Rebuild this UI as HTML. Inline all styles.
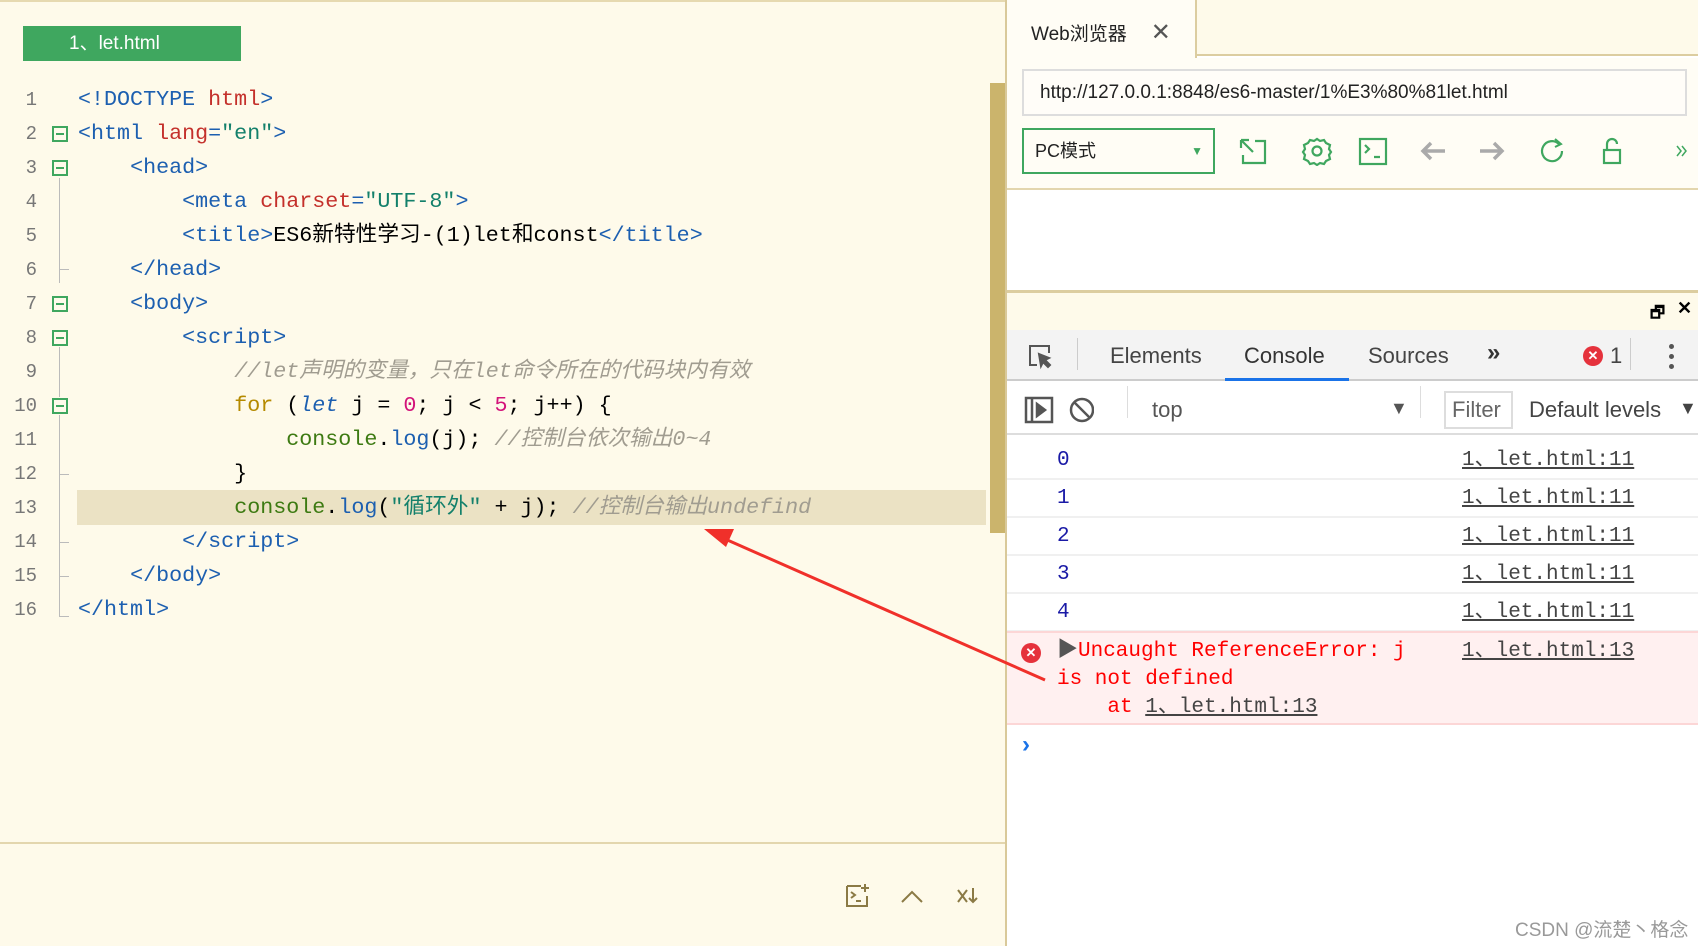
<!DOCTYPE html>
<html><head><meta charset="utf-8"><style>
*{margin:0;padding:0;box-sizing:border-box}
body{width:1698px;height:946px;position:relative;overflow:hidden;background:#fefaea;font-family:"Liberation Sans","Noto Sans CJK SC",sans-serif}
.abs{position:absolute}
#left{left:0;top:0;width:1005px;height:946px;background:#fefaea;border-top:2px solid #e6d9b0}
.tab{left:23px;top:24px;width:218px;height:35px;background:#3fa75f;color:#fff;font-size:19px;line-height:35px;padding-left:46px}
.code{font-family:"Liberation Mono","Noto Sans CJK SC",monospace;font-size:21.7px;white-space:pre;line-height:34px}
.ln{left:0;width:37px;text-align:right;color:#777;font-family:"Liberation Mono",monospace;font-size:19px}
.ln div{height:34px;line-height:34px}
.fold{width:16px;height:16px;border:2px solid #3fa75f;left:52px}
.fold:after{content:"";position:absolute;left:2px;top:5px;width:8px;height:2px;background:#3fa75f}
.t{color:#1c5fb0}.a{color:#c4302b}.v{color:#13806b}.c{color:#a09c90;font-style:italic}.k{color:#b58a00}.n{color:#d3127a}.g{color:#3d7a12}
#right{left:1005px;top:0;width:693px;height:946px;border-left:2px solid #d9c99a;background:#fff}
.mono{font-family:"Liberation Mono","Noto Sans CJK SC",monospace}
.row{position:absolute;left:0;width:693px;height:38px;border-bottom:2px solid #f0f0f0;font-size:21px;line-height:38px}
.lnk{position:absolute;left:455px;color:#444;text-decoration:underline}
</style></head><body>
<div id="left" class="abs">
 <div class="abs tab">1、let.html</div>
 <div class="abs" style="left:77px;top:488px;width:909px;height:35px;background:#ebe2c4"></div>
 <div class="abs" style="left:990px;top:81px;width:15px;height:450px;background:#cbb46c"></div>
 <div class="abs ln" style="top:81px">
  <div>1</div><div>2</div><div>3</div><div>4</div><div>5</div><div>6</div><div>7</div><div>8</div><div>9</div><div>10</div><div>11</div><div>12</div><div>13</div><div>14</div><div>15</div><div>16</div></div>
 <div class="abs fold" style="top:124px"></div>
 <div class="abs fold" style="top:158px"></div>
 <div class="abs fold" style="top:294px"></div>
 <div class="abs fold" style="top:328px"></div>
 <div class="abs fold" style="top:396px"></div>
 <div class="abs" style="left:59px;top:176px;width:1px;height:105px;background:#bbb"></div>
 <div class="abs" style="left:59px;top:345px;width:1px;height:50px;background:#bbb"></div>
 <div class="abs" style="left:59px;top:413px;width:1px;height:202px;background:#bbb"></div>
 <div class="abs" style="left:59px;top:267px;width:10px;height:1px;background:#bbb"></div>
 <div class="abs" style="left:59px;top:472px;width:10px;height:1px;background:#bbb"></div>
 <div class="abs" style="left:59px;top:540px;width:10px;height:1px;background:#bbb"></div>
 <div class="abs" style="left:59px;top:574px;width:10px;height:1px;background:#bbb"></div>
 <div class="abs" style="left:59px;top:614px;width:10px;height:1px;background:#bbb"></div>
 <div class="abs code" style="left:78px;top:81px"><span class="t">&lt;!DOCTYPE <span class="a">html</span>&gt;</span>
<span class="t">&lt;html <span class="a">lang</span>=<span class="v">"en"</span>&gt;</span>
    <span class="t">&lt;head&gt;</span>
        <span class="t">&lt;meta <span class="a">charset</span>=<span class="v">"UTF-8"</span>&gt;</span>
        <span class="t">&lt;title&gt;</span>ES6新特性学习-(1)let和const<span class="t">&lt;/title&gt;</span>
    <span class="t">&lt;/head&gt;</span>
    <span class="t">&lt;body&gt;</span>
        <span class="t">&lt;script&gt;</span>
            <span class="c">//let声明的变量，只在let命令所在的代码块内有效</span>
            <span class="k">for</span> (<span class="t" style="font-style:italic">let</span> j = <span class="n">0</span>; j &lt; <span class="n">5</span>; j++) {
                <span class="g">console</span>.<span class="t">log</span>(j); <span class="c">//控制台依次输出0~4</span>
            }
            <span class="g">console</span>.<span class="t">log</span>(<span class="v">"循环外"</span> + j); <span class="c">//控制台输出undefind</span>
        <span class="t">&lt;/script&gt;</span>
    <span class="t">&lt;/body&gt;</span>
<span class="t">&lt;/html&gt;</span></div>
 <div class="abs" style="left:0;top:840px;width:1005px;height:2px;background:#e3d6ae"></div>
 <svg class="abs" style="left:845px;top:880px" width="140" height="30" fill="none" stroke="#8b7a45" stroke-width="2">
  <path d="M2 4h14M2 4v20h20v-10M6 10l4 3-4 3M11 19h5M20 2v8M16 6h8"/>
  <path d="M57 20l10-10 10 10"/>
  <path d="M113 8l9 12M122 8l-9 12M128 6v14M124 16l4 4 4-4"/>
 </svg>
</div>
<div id="right" class="abs">
 <div class="abs" style="left:0;top:0;width:693px;height:56px;background:#fefaea;border-bottom:2px solid #dccda0"></div>
 <div class="abs" style="left:0;top:0;width:190px;height:58px;background:#fffdf5;border-right:2px solid #dccda0;font-size:19px;padding:18px 0 0 24px;color:#222">Web浏览器<span style="margin-left:24px;font-size:24px;color:#555;font-weight:300">✕</span></div>
 <div class="abs" style="left:0;top:58px;width:693px;height:130px;background:#fffdf5"></div>
 <div class="abs" style="left:0;top:188px;width:693px;height:102px;background:#fff;border-top:2px solid #e3d6ae"></div>
 <div class="abs" style="left:15px;top:69px;width:665px;height:47px;border:2px solid #ddd;background:#fffdf8;font-size:19px;line-height:43px;padding-left:16px;color:#222">http://127.0.0.1:8848/es6-master/1%E3%80%81let.html</div>
 <div class="abs" style="left:15px;top:128px;width:193px;height:46px;border:2px solid #3fa75f;font-size:18px;line-height:42px;padding-left:11px;color:#222">PC模式<span style="position:absolute;right:10px;top:0;color:#3fa75f;font-size:12px">▼</span></div>
 <svg class="abs" style="left:230px;top:136px" width="460" height="30" fill="none" stroke-width="2.2">
  <g stroke="#3fa75f"><path d="M4 4h8M4 4v8M4 4l12 12M18 5h10v22H6v-8"/>
  <path d="M77 5l3-2 3 2 4-1 2 3 4 2-1 4 2 3-2 3 1 4-4 2-2 3-4-1-3 2-3-2-4 1-2-3-4-2 1-4-2-3 2-3-1-4 4-2 2-3z"/><circle cx="80" cy="15" r="4.5"/>
  <rect x="123" y="3" width="26" height="25"/><path d="M128 9l4 4-4 4M137 21h6"/>
  <path d="M322 8a10 10 0 1 0 3 7"/><path d="M318 3l6 5-6 3" stroke-width="2"/>
  <rect x="367" y="14" width="16" height="13"/><path d="M370 14v-6a5 5 0 0 1 10 0"/>
  <path d="M440 10l4 5-4 5M445 10l4 5-4 5" stroke-width="1.5"/></g>
  <g stroke="#aaa" stroke-width="3.5" fill="none"><path d="M208 15h-22M194 7l-8 8 8 8"/><path d="M243 15h22M257 7l8 8-8 8"/></g>
 </svg>
 <div class="abs" style="left:0;top:290px;width:693px;height:40px;background:#fefaea;border-top:3px solid #dccda0"></div>
 <div class="abs" style="left:643px;top:302px;font-size:16px;font-weight:bold">🗗</div>
 <div class="abs" style="left:670px;top:298px;font-size:18px;font-weight:bold">✕</div>
 <div class="abs" style="left:0;top:330px;width:693px;height:51px;background:#f3f3f3;border-bottom:2px solid #ccc"></div>
 <svg class="abs" style="left:20px;top:343px" width="30" height="30" fill="none" stroke="#555" stroke-width="2"><path d="M10 22H3V3h19v7"/><path d="M12 11l10 4-4 2 5 5-2 2-5-5-2 4z" fill="#555"/></svg>
 <div class="abs" style="left:70px;top:338px;width:1px;height:32px;background:#ccc"></div>
 <div class="abs" style="left:103px;top:343px;font-size:22px;color:#444">Elements</div>
 <div class="abs" style="left:237px;top:343px;font-size:22px;color:#333">Console</div>
 <div class="abs" style="left:218px;top:378px;width:124px;height:3px;background:#1a73e8"></div>
 <div class="abs" style="left:361px;top:343px;font-size:22px;color:#444">Sources</div>
 <div class="abs" style="left:480px;top:339px;font-size:24px;color:#333;font-weight:bold">»</div>
 <div class="abs" style="left:576px;top:346px;width:20px;height:20px;border-radius:50%;background:#e5323c;color:#fff;font-size:13px;text-align:center;line-height:20px;font-weight:bold">✕</div>
 <div class="abs" style="left:603px;top:343px;font-size:22px;color:#444">1</div>
 <div class="abs" style="left:623px;top:338px;width:1px;height:32px;background:#ccc"></div>
 <div class="abs" style="left:662px;top:344px;width:5px;height:5px;border-radius:50%;background:#555;box-shadow:0 10px 0 #555,0 20px 0 #555"></div>
 <div class="abs" style="left:0;top:381px;width:693px;height:54px;background:#fff;border-bottom:2px solid #ddd"></div>
 <svg class="abs" style="left:17px;top:396px" width="70" height="30" fill="none" stroke="#555" stroke-width="2.5"><rect x="2" y="2" width="26" height="24"/><path d="M8 2v24"/><path d="M13 8l8 6-8 6z" fill="#555"/><circle cx="58" cy="14" r="11"/><path d="M50 6l16 16"/></svg>
 <div class="abs" style="left:120px;top:386px;width:1px;height:32px;background:#ddd"></div>
 <div class="abs" style="left:145px;top:397px;font-size:22px;color:#555">top</div>
 <div class="abs" style="left:383px;top:398px;font-size:18px;color:#555">▼</div>
 <div class="abs" style="left:413px;top:386px;width:1px;height:32px;background:#ddd"></div>
 <div class="abs" style="left:437px;top:391px;width:69px;height:38px;border:2px solid #ddd;font-size:22px;color:#666;line-height:34px;padding-left:6px">Filter</div>
 <div class="abs" style="left:522px;top:397px;font-size:22px;color:#444">Default levels</div>
 <div class="abs" style="left:672px;top:398px;font-size:18px;color:#444">▼</div>
 <div class="mono">
  <div class="row" style="top:442px"><span style="position:absolute;left:50px;color:#1a1aa6">0</span><span class="lnk">1、let.html:11</span></div>
  <div class="row" style="top:480px"><span style="position:absolute;left:50px;color:#1a1aa6">1</span><span class="lnk">1、let.html:11</span></div>
  <div class="row" style="top:518px"><span style="position:absolute;left:50px;color:#1a1aa6">2</span><span class="lnk">1、let.html:11</span></div>
  <div class="row" style="top:556px"><span style="position:absolute;left:50px;color:#1a1aa6">3</span><span class="lnk">1、let.html:11</span></div>
  <div class="row" style="top:594px"><span style="position:absolute;left:50px;color:#1a1aa6">4</span><span class="lnk">1、let.html:11</span></div>
  <div class="abs" style="left:0;top:631px;width:693px;height:94px;background:#fff0f0;border-top:2px solid #fcd6d6;border-bottom:2px solid #fcd6d6;font-size:21px;line-height:28px;color:#f00">
   <div class="abs" style="left:14px;top:10px;width:20px;height:20px;border-radius:50%;background:#e5323c;color:#fff;font-size:13px;text-align:center;line-height:20px;font-family:'Liberation Sans';font-weight:bold">✕</div>
   <div class="abs" style="left:50px;top:5px;white-space:pre"><span style="color:#555">▶</span>Uncaught ReferenceError: j
is not defined
    at <span style="color:#444;text-decoration:underline">1、let.html:13</span></div>
   <span class="abs" style="left:455px;top:5px;color:#444;text-decoration:underline">1、let.html:13</span>
  </div>
 </div>
 <div class="abs" style="left:15px;top:731px;font-size:24px;color:#1a73e8;font-weight:bold">›</div>
 <div class="abs" style="left:508px;top:915px;font-size:19px;color:#999">CSDN @流楚丶格念</div>
</div>
<svg class="abs" style="left:0;top:0" width="1698" height="946"><path d="M1045 680L716 535" stroke="#f0302a" stroke-width="3"/><path d="M704 529l30 0-8 18z" fill="#f0302a"/></svg>
</body></html>
